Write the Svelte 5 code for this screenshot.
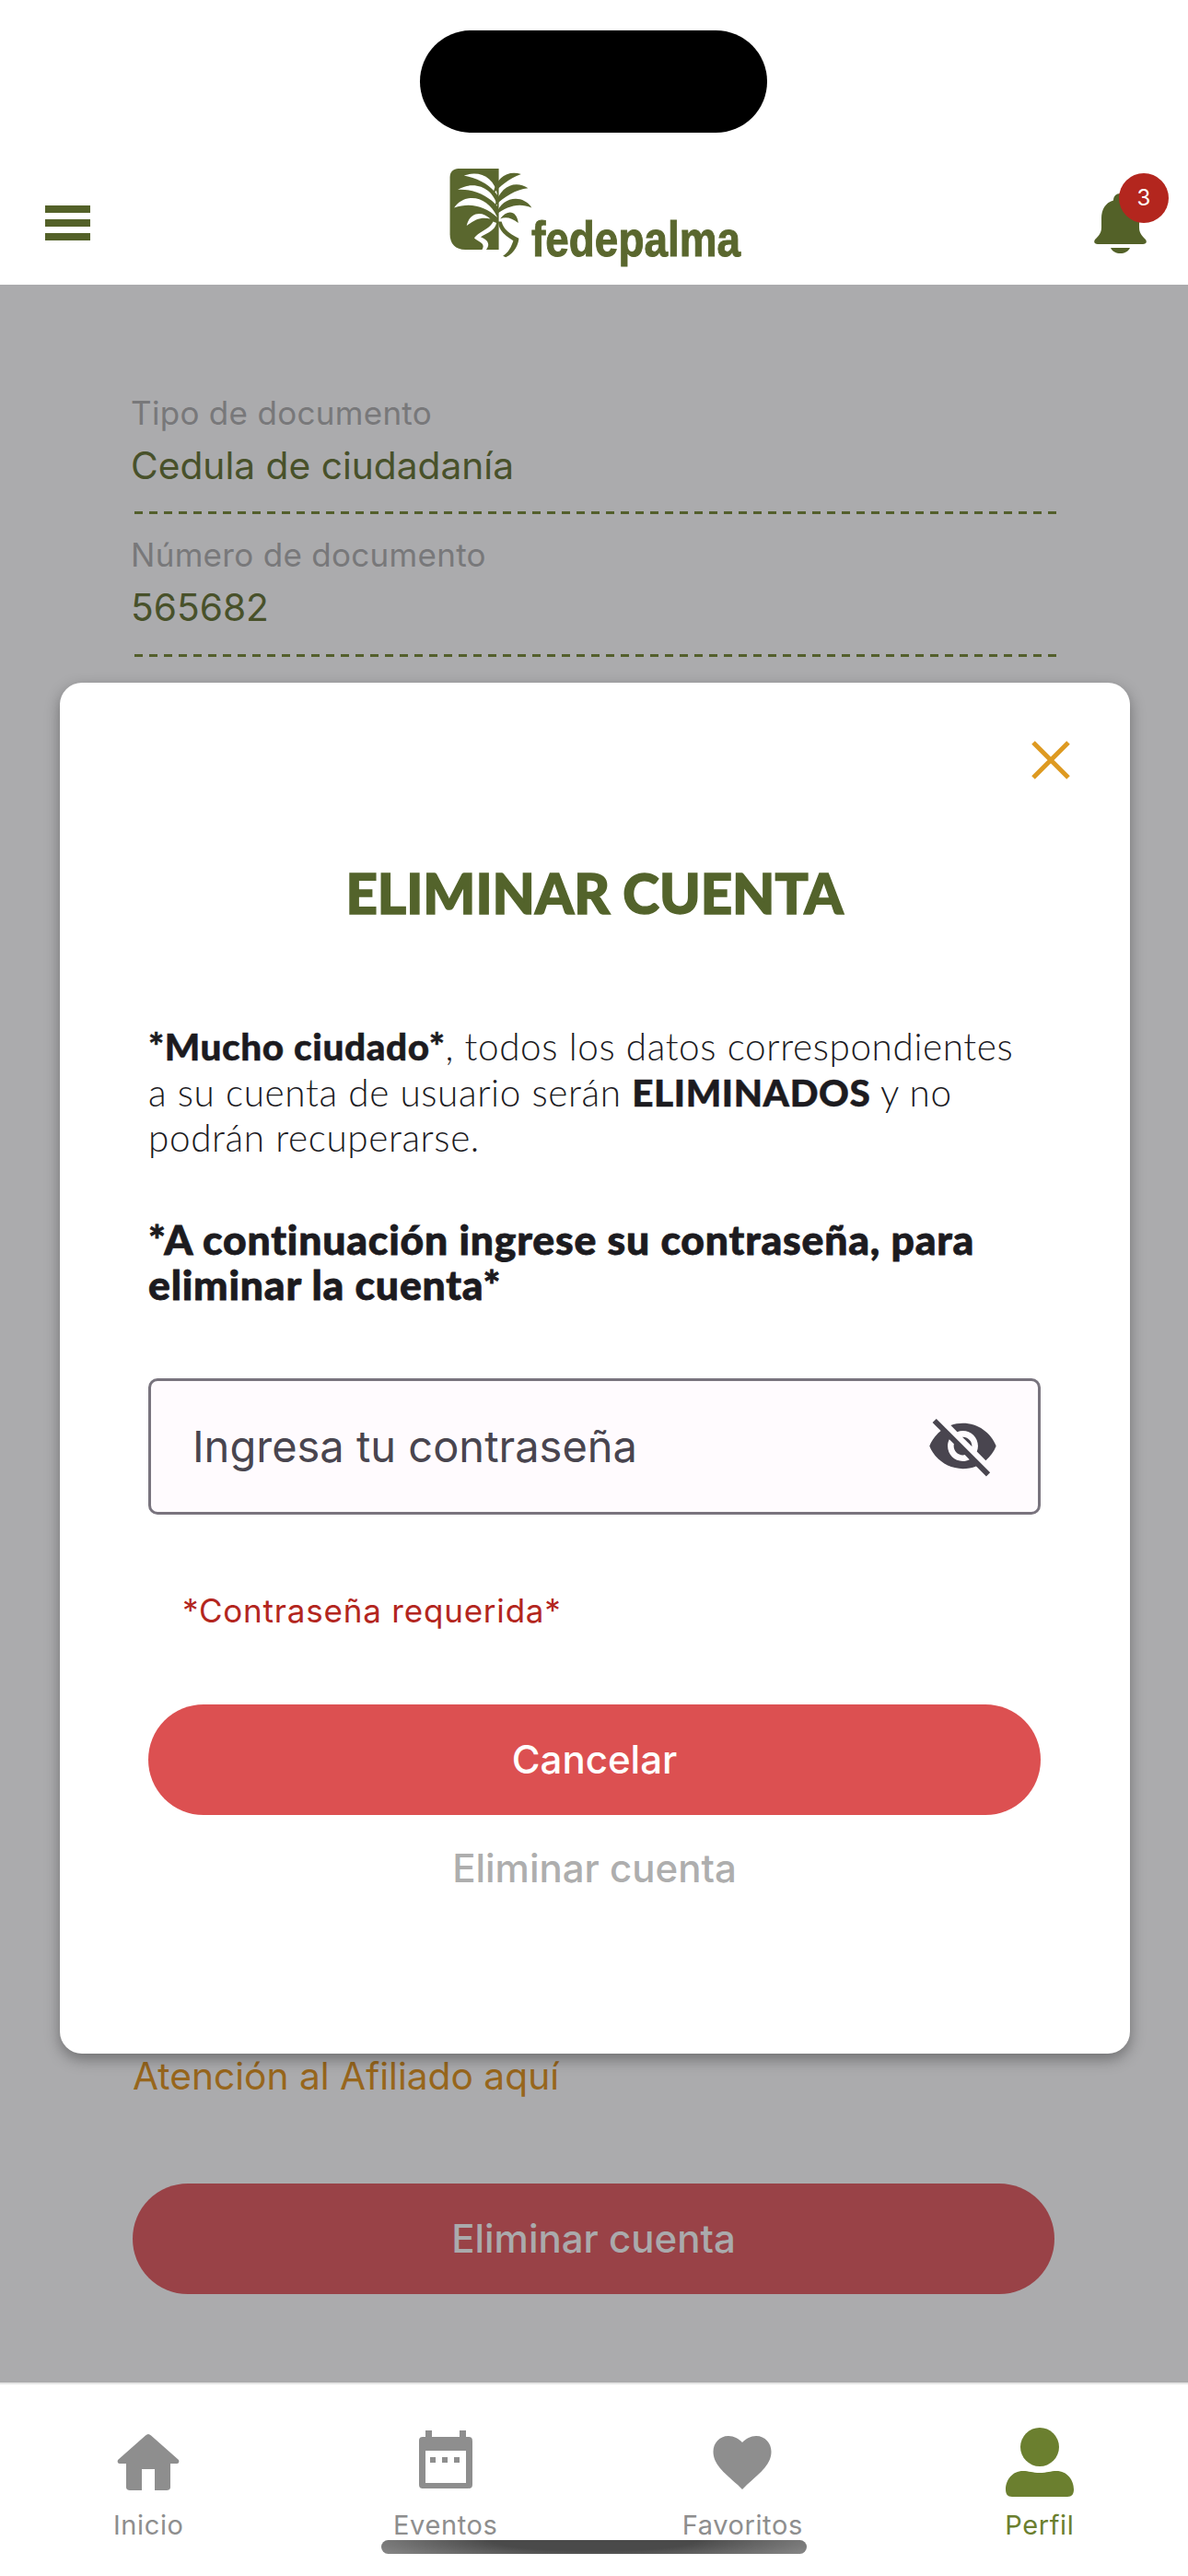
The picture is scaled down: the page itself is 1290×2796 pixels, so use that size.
<script>
  const tabs = ['Inicio', 'Eventos', 'Favoritos', 'Perfil'];
</script>

<div class="page">
  <div class="island"></div>
  <header class="top">
    <div class="burger"><i></i><i></i><i></i></div>
    <div class="logo">
      <svg class="palm" viewBox="0 0 300 330" aria-hidden="true">
        <path fill="#5a672e" d="M35 0H180V290H60C25 290 5 270 5 235V30C5 12 18 0 35 0Z"/>
        <g fill="#fff">
          <path d="M55 25C110 5 165 30 175 95C150 60 110 35 55 25Z"/>
          <path d="M33 75C95 40 160 70 175 135C145 100 95 72 33 75Z"/>
          <path d="M20 140C60 85 140 95 175 175C130 135 80 120 20 140Z"/>
          <path d="M65 205C75 155 120 150 150 180C120 172 95 180 65 205Z"/>
          <path d="M160 190C150 215 110 225 92 248C105 262 135 265 120 290H135C155 265 130 250 115 245C135 232 165 225 172 195Z"/>
        </g>
        <g fill="#5a672e">
          <path d="M260 20C215 5 170 30 160 90C185 65 215 35 260 20Z"/>
          <path d="M285 70C240 40 185 60 165 135C200 100 240 75 285 70Z"/>
          <path d="M298 140C265 90 190 100 170 165C210 135 250 120 298 140Z"/>
          <path d="M250 195C245 150 210 145 185 180C205 172 225 175 250 195Z"/>
          <path d="M178 190C180 225 205 240 232 258C225 280 215 300 195 313L205 318C240 300 250 270 252 250C225 235 200 225 190 190Z"/>
        </g>
      </svg>
      <span class="wordmark">fedepalma</span>
    </div>
    <div class="bell">
      <svg viewBox="0 0 57 65" aria-hidden="true">
        <path fill="#536128" d="M28.500 0C33 0 36 3 36 7.500C45 10 49 18 49 27V37C49 43 52 46 56 50C58 53 56 55 53 55H4C1 55 -1 53 1 50C5 46 8 43 8 37V27C8 18 12 10 21 7.500C21 3 24 0 28.500 0Z"/>
        <path fill="#536128" d="M18 59H39C37 63 33 65 28.500 65C24 65 20 63 18 59Z"/>
      </svg>
      <span class="badge">3</span>
    </div>
  </header>

  <main class="content">
    <div class="field first">
      <span class="label">Tipo de documento</span>
      <span class="value">Cedula de ciudadanía</span>
    </div>
    <div class="field">
      <span class="label">Número de documento</span>
      <span class="value">565682</span>
    </div>
    <div class="spacer"></div>
    <a class="link" href="#top">Atención al Afiliado aquí</a>
    <div class="danger">Eliminar cuenta</div>
  </main>

  <nav class="tabs">
    {#each tabs as t, i}
      <div class="tab" class:on={i === 3}>
        <div class="tabicon">
          {#if i === 0}
            <svg width="76" height="76" viewBox="0 0 76 76" aria-hidden="true"><path fill="currentColor" d="M38 7C39 7 40 7.500 41 8.500L71 35C72 37 71 39 69 39H62V65C62 67 60 68 58 68H45V45H31V68H18C16 68 14 67 14 65V39H7C5 39 4 37 5 35L35 8.500C36 7.500 37 7 38 7Z"/></svg>
          {:else if i === 1}
            <svg width="76" height="76" viewBox="0 -3 76 76" aria-hidden="true"><path fill="currentColor" fill-rule="evenodd" d="M16 0H23V7H53V0H60V7H62C66 7 67 8 67 12V58C67 62 66 63 62 63H14C10 63 9 62 9 58V12C9 8 10 7 14 7H16ZM16 22V57H60V22ZM21 29H27V35H21ZM34 29H40V35H34ZM47 29H53V35H47Z"/></svg>
          {:else if i === 2}
            <svg width="76" height="76" viewBox="0 -3 76 76" aria-hidden="true"><path fill="currentColor" d="M38 64L33 59C17 45 6.500 36 6.500 23C6.500 14 13 6 23 6C29 6 34 9 38 13C42 9 47 6 53 6C63 6 69.500 14 69.500 23C69.500 36 59 45 43 59Z"/></svg>
          {:else}
            <svg width="76" height="76" viewBox="0 0 76 76" aria-hidden="true"><circle cx="38" cy="21" r="21" fill="currentColor"/><path fill="currentColor" d="M20 47C26 47 30 49 38 49C46 49 50 47 56 47C68 47 75 57 75 67C75 72 73 75 68 75H8C3 75 1 72 1 67C1 57 8 47 20 47Z"/></svg>
          {/if}
        </div>
        <span class="tablabel">{t}</span>
      </div>
    {/each}
    <div class="indicator"></div>
  </nav>

  <section class="modal">
    <svg class="close" viewBox="0 0 42 42" aria-hidden="true"><path d="M2 2L40 40M40 2L2 40" stroke="#de9a21" stroke-width="5" fill="none"/></svg>
    <h2>ELIMINAR CUENTA</h2>
    <p class="warn"><b>*Mucho ciudado*</b>, todos los datos correspondientes<br>a su cuenta de usuario serán <b>ELIMINADOS</b> y no<br>podrán recuperarse.</p>
    <p class="strong">*A continuación ingrese su contraseña, para<br>eliminar la cuenta*</p>
    <div class="input">
      <span>Ingresa tu contraseña</span>
      <svg width="79" height="79" viewBox="0 0 24 24" aria-hidden="true"><path fill="#49454f" d="M12 7c2.760 0 5 2.240 5 5 0 .65-.13 1.260-.36 1.830l2.920 2.920c1.510-1.260 2.700-2.890 3.430-4.750-1.730-4.390-6-7.500-11-7.500-1.400 0-2.740.25-3.980.7l2.160 2.160C10.740 7.130 11.350 7 12 7zM2 4.270l2.280 2.280.46.46C3.080 8.300 1.780 10.020 1 12c1.730 4.390 6 7.500 11 7.500 1.550 0 3.030-.3 4.380-.84l.42.42L19.730 22 21 20.730 3.270 3 2 4.270zM7.530 9.800l1.550 1.550c-.05.21-.08.43-.08.65 0 1.660 1.340 3 3 3 .22 0 .44-.03.65-.08l1.550 1.550c-.67.33-1.410.53-2.200.53-2.760 0-5-2.240-5-5 0-.79.2-1.530.53-2.200zm4.310-.78l3.150 3.150.02-.16c0-1.660-1.340-3-3-3l-.17.01z"/></svg>
    </div>
    <div class="error">*Contraseña requerida*</div>
    <div class="cancel">Cancelar</div>
    <div class="delete">Eliminar cuenta</div>
  </section>
</div>

<style>
  :global(body) { margin: 0; background: #fff; }
  .page {
    position: relative;
    width: 1290px;
    height: 2796px;
    overflow: hidden;
    display: flex;
    flex-direction: column;
    font-family: Inter, sans-serif;
  }
  .island {
    position: absolute;
    left: 456px;
    top: 33px;
    width: 377px;
    height: 111px;
    border-radius: 56px;
    background: #000;
  }
  .top {
    height: 309px;
    flex: none;
    box-sizing: border-box;
    padding: 183px 45px 0 49px;
    display: flex;
    justify-content: space-between;
    align-items: flex-start;
    background: #fff;
  }
  .burger {
    width: 49px;
    margin-top: 40px;
    display: flex;
    flex-direction: column;
    gap: 7px;
  }
  .burger i { display: block; height: 8px; background: #536128; }
  .logo {
    width: 316px;
    height: 105px;
    margin-left: 4px;
    position: relative;
  }
  .palm { position: absolute; left: 0; top: 0; width: 91px; height: 100px; }
  .wordmark {
    position: absolute;
    left: 90px;
    top: 46px;
    font: 700 54px/60px "Liberation Sans", sans-serif;
    color: #5a672e;
    -webkit-text-stroke: 1px #5a672e;
    transform: scaleX(0.85);
    transform-origin: left center;
  }
  .bell { position: relative; width: 57px; height: 65px; margin-top: 27px; }
  .bell svg { display: block; width: 57px; height: 65px; }
  .badge {
    position: absolute;
    left: 27px;
    top: -22px;
    width: 54px;
    height: 54px;
    border-radius: 50%;
    background: #b3261e;
    color: #fff;
    font: 400 24px/54px Inter, sans-serif;
    text-align: center;
  }
  .content {
    flex: 1;
    background: #ababad;
    box-sizing: border-box;
    padding: 0 142px 96px 142px;
    display: flex;
    flex-direction: column;
  }
  .field {
    display: flex;
    flex-direction: column;
    box-sizing: border-box;
    height: 155px;
    background: repeating-linear-gradient(90deg, #535f2c 0 9px, transparent 9px 16px) 4px 100% / 1002px 3px no-repeat;
  }
  .first { margin-top: 118px; height: 131px; }
  .field + .field { padding-top: 23px; height: 155px; }
  .label { font-size: 35px; line-height: 42px; color: #78787a; letter-spacing: 0.300px; }
  .value { font-size: 40.700px; line-height: 50px; color: #48512a; margin-top: 12px; }
  .spacer { flex: 1; }
  .link { margin-left: 2px; font-size: 40.700px; line-height: 50px; color: #97661c; text-decoration: none; }
  .danger {
    margin-top: 91px;
    width: 1001px;
    margin-left: 2px;
    height: 120px;
    border-radius: 60px;
    background: #994247;
    color: #aaaaac;
    font-size: 42px;
    font-weight: 500;
    line-height: 120px;
    text-align: center;
  }
  .tabs {
    position: relative;
    height: 210px;
    flex: none;
    box-sizing: border-box;
    border-top: 2px solid #e6e6e6;
    background: #fff;
    display: grid;
    grid-template-columns: repeat(4, 1fr);
    color: #8e8e8e;
  }
  .tab { display: flex; flex-direction: column; align-items: center; padding-top: 47px; }
  .tab.on { color: #6b7f2f; }
  .tabicon { height: 88px; }
  .tabicon svg { display: block; }
  .tablabel { font-size: 29px; line-height: 36px; letter-spacing: 0.600px; }
  .indicator {
    position: absolute;
    left: 414px;
    top: 169px;
    width: 462px;
    height: 15px;
    border-radius: 8px;
    background: radial-gradient(ellipse 60% 200% at 50% 0, #4a4a4a 40%, #8c8c8c 100%);
  }
  .modal {
    position: absolute;
    left: 65px;
    top: 741px;
    width: 1162px;
    height: 1488px;
    box-sizing: border-box;
    padding: 0 97px 0 96px;
    border-radius: 24px;
    background: #fff;
    box-shadow: 0 6px 16px rgba(0, 0, 0, 0.35);
    display: flex;
    flex-direction: column;
    font-family: Lato, sans-serif;
    color: #1c1b1f;
  }
  .close { position: absolute; right: 65px; top: 63px; width: 42px; height: 42px; }
  h2 {
    margin: 193px 0 0;
    font-size: 60px;
    line-height: 70px;
    font-weight: 900;
    text-align: center;
    color: #53632b;
    -webkit-text-stroke: 1.500px #53632b;
  }
  .warn { margin: 107px 0 0; font-size: 40.500px; line-height: 49.500px; font-weight: 300; letter-spacing: 0.600px; white-space: nowrap; }
  .warn b { font-weight: 900; -webkit-text-stroke: 0.500px #1c1b1f; }
  .strong { margin: 60px 0 0; font-size: 44.500px; line-height: 49px; font-weight: 900; letter-spacing: 0.800px; white-space: nowrap; -webkit-text-stroke: 0.800px #1c1b1f; }
  .input {
    margin-top: 78px;
    height: 148px;
    flex: none;
    box-sizing: border-box;
    border: 3px solid #79747e;
    border-radius: 10px;
    background: #fffbfe;
    padding: 0 42px 0 45px;
    display: flex;
    align-items: center;
    justify-content: space-between;
    font-family: Inter, sans-serif;
    font-size: 47px;
    color: #49454f;
  }
  .error {
    margin: 82px 0 0 37px;
    font-family: Inter, sans-serif;
    font-size: 35px;
    line-height: 44px;
    letter-spacing: 0.800px;
    color: #b3261e;
  }
  .cancel {
    margin-top: 80px;
    height: 120px;
    flex: none;
    border-radius: 60px;
    background: #dc5051;
    color: #fff;
    font-family: Inter, sans-serif;
    font-size: 42px;
    font-weight: 500;
    line-height: 120px;
    text-align: center;
  }
  .delete {
    margin-top: 33px;
    font-family: Inter, sans-serif;
    font-size: 42px;
    font-weight: 500;
    line-height: 50px;
    text-align: center;
    color: #aeaeae;
  }
</style>
